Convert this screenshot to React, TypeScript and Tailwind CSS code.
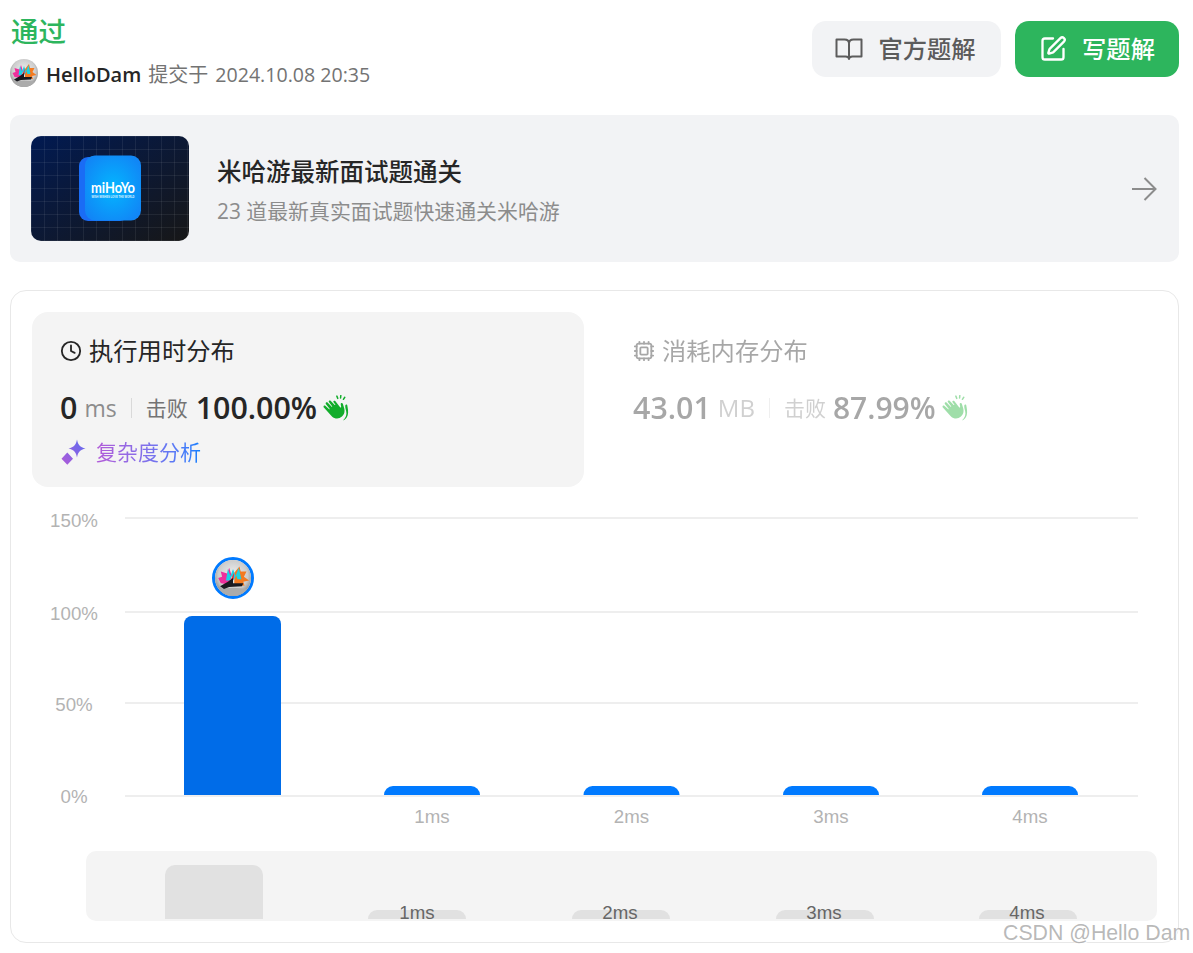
import { Clock, Cpu, SquarePen } from 'lucide-react';

const FONT = 'font-["Open_Sans","Noto_Sans_CJK_SC",sans-serif]';

function Avatar({ size, id }: { size: number; id: string }) {
  return (
    <svg width={size} height={size} viewBox="0 0 28 28" className="shrink-0">
      <defs>
        <radialGradient id={`${id}-bg`} cx="50%" cy="42%" r="58%">
          <stop offset="0%" stopColor="#f0f0f0" />
          <stop offset="70%" stopColor="#cdcdcd" />
          <stop offset="100%" stopColor="#8c8c8c" />
        </radialGradient>
        <clipPath id={`${id}-clip`}>
          <circle cx="14" cy="14" r="14" />
        </clipPath>
      </defs>
      <g clipPath={`url(#${id}-clip)`}>
        <rect width="28" height="28" fill={`url(#${id}-bg)`} />
        <path d="M2 23 Q14 20 26 23 L24 28 H4 Z" fill="#ababab" />
        <path d="M15 10 L19 5 L20 9 L24.500 9 L22.500 13 L26.500 16 L22 17 L23 20 L15 19 Z" fill="#f47a20" />
        <path d="M2.500 14 L5.500 13 L4.500 9 L9.500 10.500 L11 6 L13 12 L11 19 L4.500 18 Z" fill="#ee2f9c" />
        <path d="M8.500 16 L10 7 L12 12.500 L14 7 L16 12.500 L18.500 6 L20.500 15 L17.500 15 L16.500 12 L14.500 16 L13 12.500 L11.500 16 Z" fill="#19d3e6" />
        <path d="M11 18 L15 9.500 L14.500 15 Z" fill="#e8303c" />
        <path d="M4 20.500 L10 17 L14 14 L14 18 L22 18 L21 20.500 L11 21 L7 22.500 Z" fill="#1a1a20" />
      </g>
    </svg>
  );
}

function Clap({ className }: { className?: string }) {
  return (
    <svg width="26" height="26" viewBox="1.500 0.500 22.500 23" className={className}>
      <path
        fill="#12ad2b"
        d="M2 11.500c-.9-.9.3-2.200 1.300-1.400l3.400 3c.3.300.7-.1.400-.4L3.900 8.600c-.9-1 .5-2.300 1.400-1.400l3.600 3.700c.3.300.7-.1.400-.4L6.600 6.900c-.9-1 .5-2.200 1.400-1.300l3.600 3.700c.3.300.7 0 .5-.4L10.600 7c-.7-1 .7-2 1.500-1.100l4.300 5.400c.4.500 1 .2.900-.4l-.4-2.200c-.2-1.300 1.500-1.700 1.900-.5l1.200 4.100c.8 2.800 0 5.400-2 7.300-2.600 2.400-6.300 2.300-8.800-.1z"
      />
      <path
        fill="#12ad2b"
        d="M21 9.500c.5-1 1.800-.6 1.800.5.300 1.800 1.200 5.600.3 8.400-.6 2.100-2.100 3.900-4.200 4.600 2.700-2.500 3.600-5.200 2.800-8.400-.3-1.500-1-3.500-.7-5.100z"
      />
      <path fill="none" stroke="#12ad2b" strokeWidth="1.300" strokeLinecap="round" d="M13.500 1.500l.8 2M17 1l-.2 2.200M20.500 2.500l-1.200 1.800" />
    </svg>
  );
}

function Sparkle() {
  return (
    <svg width="26" height="26" viewBox="0 0 26 26" className="shrink-0">
      <defs>
        <linearGradient id="sp" x1="0" y1="1" x2="1" y2="0">
          <stop offset="0%" stopColor="#b05ad8" />
          <stop offset="100%" stopColor="#5b6cf0" />
        </linearGradient>
      </defs>
      <path
        fill="url(#sp)"
        d="M17 .5c.9 5.200 3 7.600 8.500 9-5.500 1.400-7.600 3.800-8.500 9-.9-5.200-3-7.600-8.500-9 5.500-1.400 7.600-3.800 8.500-9zM7.300 13.500l5.700 6.200-5.700 6-5.800-6z"
      />
    </svg>
  );
}

function BookIcon() {
  return (
    <svg width="28" height="28" viewBox="0 0 28 28" fill="none" stroke="#5c5c5c" strokeWidth="2" strokeLinejoin="round" className="shrink-0">
      <path d="M1.500 4.500h8c2.500 0 4.500 1.500 4.500 4 0-2.500 2-4 4.500-4h8v17h-9c-1.800 0-3.500.7-3.500 2.500 0-1.800-1.700-2.500-3.500-2.500h-9z" />
      <path d="M14 8.500V24" />
    </svg>
  );
}

function MihoyoThumb() {
  const grid = [];
  for (let i = 0; i < 13; i++) grid.push(<path key={`v${i}`} d={`M${i * 13 + 0.5} 0V105`} stroke="#ffffff" strokeOpacity="0.07" />);
  for (let i = 0; i < 9; i++) grid.push(<path key={`h${i}`} d={`M0 ${i * 13 + 0.5}H158`} stroke="#ffffff" strokeOpacity="0.07" />);
  return (
    <svg width="158" height="105" viewBox="0 0 158 105" className="shrink-0 rounded-[10px]">
      <defs>
        <linearGradient id="th" x1="0" y1="0" x2="1" y2="1">
          <stop offset="0%" stopColor="#011a52" />
          <stop offset="100%" stopColor="#171717" />
        </linearGradient>
        <radialGradient id="tile" cx="50%" cy="50%" r="60%">
          <stop offset="0%" stopColor="#03b6ff" />
          <stop offset="100%" stopColor="#1186f6" />
        </radialGradient>
      </defs>
      <rect width="158" height="105" fill="url(#th)" />
      {grid}
      <rect x="48" y="21" width="50" height="64" rx="9" fill="#1a6cf5" />
      <rect x="54" y="19.500" width="56" height="65" rx="10" fill="url(#tile)" />
      <text x="82" y="57" textAnchor="middle" textLength="44" lengthAdjust="spacingAndGlyphs" fill="#fff" fontSize="15.500" fontWeight="700" fontFamily="Lato, sans-serif">miHoYo</text>
      <text x="82" y="61.500" textAnchor="middle" textLength="43" lengthAdjust="spacingAndGlyphs" fill="#dff3ff" fontSize="2.800" fontWeight="700" fontFamily="Liberation Sans, sans-serif">WISH WISHES LOVE THE WORLD</text>
    </svg>
  );
}

const GRID_Y = [
  { label: '150%', y: 26, ty: 35 },
  { label: '100%', y: 120, ty: 128 },
  { label: '50%', y: 211, ty: 219 },
  { label: '0%', y: 304, ty: 311 },
];

const BARS = [
  { label: '1ms', x: 384 },
  { label: '2ms', x: 583.500 },
  { label: '3ms', x: 783 },
  { label: '4ms', x: 982 },
];

const MINI = [
  { label: '1ms', x: 368, tx: 417 },
  { label: '2ms', x: 572, tx: 620 },
  { label: '3ms', x: 776, tx: 824 },
  { label: '4ms', x: 979, tx: 1027 },
];

// svg starts at page y=492, x=32: the viewBox x below are page x
function Chart() {
  return (
    <svg width="1126" height="430" viewBox="32 0 1126 430" className="mt-[5px] block" fontFamily="Liberation Sans, sans-serif">
      {GRID_Y.map((g) => (
        <g key={g.label}>
          <path d={`M125 ${g.y}H1138`} stroke="#eeeeee" strokeWidth="2" />
          <text x="74" y={g.ty} textAnchor="middle" fontSize="18.700" fill="#b3b3b3">{g.label}</text>
        </g>
      ))}
      <path d="M184 303V132a8 8 0 0 1 8-8h81a8 8 0 0 1 8 8V303z" fill="#006ce8" />
      {BARS.map((b) => (
        <g key={b.label}>
          <path d={`M${b.x} 303a9 9 0 0 1 9 -9h78a9 9 0 0 1 9 9z`} fill="#007aff" />
          <text x={b.x + 48} y="331" textAnchor="middle" fontSize="18.700" fill="#b3b3b3">{b.label}</text>
        </g>
      ))}
      <rect x="86" y="359" width="1071" height="70" rx="10" fill="#f4f4f4" />
      <path d="M165 427V383a10 10 0 0 1 10-10h78a10 10 0 0 1 10 10V427z" fill="#e1e1e1" />
      {MINI.map((m) => (
        <g key={m.label}>
          <path d={`M${m.x} 427a9 9 0 0 1 9-9h80a9 9 0 0 1 9 9z`} fill="#e1e1e1" />
          <text x={m.tx} y="427" textAnchor="middle" fontSize="18.700" fill="#666666">{m.label}</text>
        </g>
      ))}
    </svg>
  );
}

export default function App() {
  return (
    <div className={`relative h-[953px] w-[1193px] overflow-hidden bg-white pr-[14px] pl-[10px] ${FONT}`}>
      <div className="flex h-[115px] items-start justify-between">
        <div className="pt-[14px]">
          <div className="ml-px text-[27.500px] leading-[36px] font-medium text-[#2db55d]">通过</div>
          <div className="mt-[11px] flex items-center">
            <div className="-mt-[4px]">
              <Avatar size={28} id="a1" />
            </div>
            <span className="ml-2 text-[20px] leading-[28px] font-semibold text-[#262626]">HelloDam</span>
            <span className="ml-[7px] text-[20px] leading-[28px] text-[#737373]">提交于</span>
            <span className="ml-[7px] text-[19.600px] leading-[28px] text-[#737373]">2024.10.08 20:35</span>
          </div>
        </div>
        <div className="flex gap-[14px] pt-[21px]">
          <button className="flex h-14 w-[189px] items-center justify-center gap-[15px] rounded-[14px] bg-[#f2f3f5] pr-[2px] text-[24.300px] font-medium text-[#5c5c5c]">
            <BookIcon />
            官方题解
          </button>
          <button className="flex h-14 w-[164px] items-center justify-center gap-[15px] rounded-[14px] bg-[#2db55d] text-[24.300px] font-medium text-white">
            <SquarePen className="h-7 w-7" strokeWidth={2} />
            写题解
          </button>
        </div>
      </div>

      <div className="flex h-[147px] items-center rounded-[10px] bg-[#f2f3f5] pr-[22px] pl-[21px]">
        <MihoyoThumb />
        <div className="ml-[28px] flex-1 pt-[4px]">
          <div className="text-[24.500px] leading-[32px] font-medium text-[#262626]">米哈游最新面试题通关</div>
          <div className="mt-[9px] text-[20.900px] leading-[28px] text-[#8c8c8c]">23 道最新真实面试题快速通关米哈游</div>
        </div>
        <svg width="26" height="26" viewBox="0 0 26 26" fill="none" stroke="#8c8c8c" strokeWidth="2" className="shrink-0">
          <path d="M1 13h23M13.500 2l11 11-11 11" />
        </svg>
      </div>

      <div className="mt-[28px] h-[653px] rounded-[16px] border border-[#e8e8e8] px-[21px] pt-[21px]">
        <div className="flex">
          <div className="h-[175px] w-[552px] rounded-[16px] bg-[#f4f4f4] px-[28px] pt-[21px]">
            <div className="flex items-center gap-[7px] text-[24.300px] leading-[36px] text-[#262626]">
              <Clock className="h-[22px] w-[22px]" strokeWidth={2} />
              执行用时分布
            </div>
            <div className="mt-[17px] flex items-center">
              <span className="text-[30.400px] leading-[44px] font-semibold text-[#262626]">0</span>
              <span className="ml-[7px] text-[23px] leading-[44px] text-[#8c8c8c]">ms</span>
              <span className="mx-[14px] h-[20px] w-px bg-[#d9d9d9]" />
              <span className="text-[21px] leading-[44px] text-[#737373]">击败</span>
              <span className="ml-2 text-[30.400px] leading-[44px] font-semibold text-[#262626]">100.00%</span>
              <Clap className="ml-[6px]" />
            </div>
            <div className="mt-[7px] flex items-center gap-[10px]">
              <Sparkle />
              <span className="bg-linear-to-r from-[#b25ad8] to-[#0080ff] bg-clip-text text-[21px] leading-[30px] text-transparent">复杂度分析</span>
            </div>
          </div>
          <div className="pt-[21px] pl-[49px] opacity-40">
            <div className="flex items-center gap-[7px] text-[24.300px] leading-[36px] text-[#262626]">
              <Cpu className="h-[22px] w-[22px]" strokeWidth={2} />
              消耗内存分布
            </div>
            <div className="mt-[17px] flex items-center">
              <span className="text-[30.400px] leading-[44px] font-semibold text-[#262626]">43.01</span>
              <span className="ml-[7px] text-[24px] leading-[44px] text-[#8c8c8c]">MB</span>
              <span className="mx-[14px] h-[20px] w-px bg-[#d9d9d9]" />
              <span className="text-[21px] leading-[44px] text-[#8c8c8c]">击败</span>
              <span className="ml-[7px] text-[30px] leading-[44px] font-semibold text-[#262626]">87.99%</span>
              <Clap className="ml-[6px]" />
            </div>
          </div>
        </div>
        <Chart />
      </div>

      {/* user's marker above the first bar */}
      <div className="absolute top-[557px] left-[212px] rounded-full border-[3px] border-[#007aff] bg-white">
        <Avatar size={36} id="a2" />
      </div>

      <div className="absolute top-[917px] left-[1003px] font-['Liberation_Sans',sans-serif] text-[21.300px] leading-[32px] whitespace-nowrap text-[#9a9a9a]/70 [text-shadow:1px_1px_1px_#ffffff]">
        CSDN @Hello Dam
      </div>
    </div>
  );
}
